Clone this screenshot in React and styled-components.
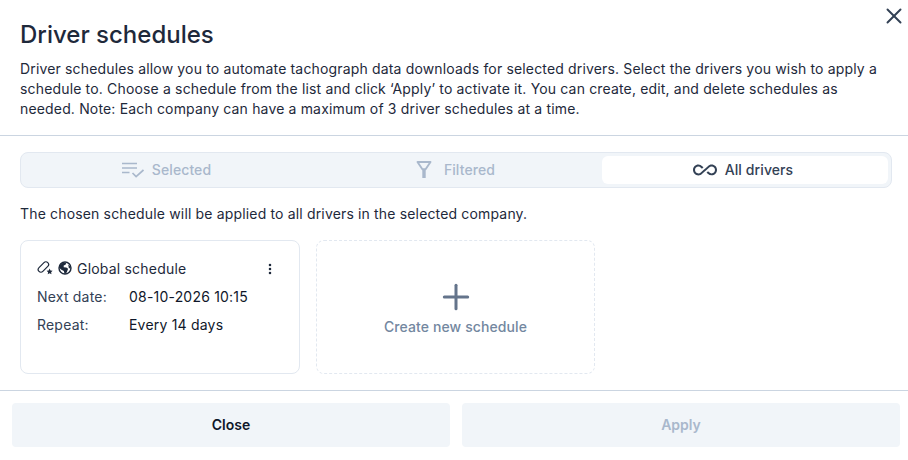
import styled, { createGlobalStyle } from 'styled-components'
import { X, Plus, EllipsisVertical } from 'lucide-react'
import { MdAllInclusive } from 'react-icons/md'

const Global = createGlobalStyle`
  html, body { margin: 0; padding: 0; background: #fff; }
  body { font-family: Inter, "Liberation Sans", sans-serif; color: #0f172a; }
`

const Modal = styled.div`
  width: 908px;
  height: 460px;
  position: relative;
  overflow: hidden;
  background: #fff;
`

const CloseIcon = styled.button`
  position: absolute;
  top: 3px;
  right: 1px;
  width: 26px;
  height: 26px;
  padding: 0;
  border: 0;
  background: none;
  color: #334155;
  display: flex;
  align-items: center;
  justify-content: center;
`

const Header = styled.header`
  height: 136px;
  box-sizing: border-box;
  padding: 19px 20px 0;
  border-bottom: 1px solid #cbd5e1;
`

const Title = styled.h1`
  margin: 0 0 8px;
  font-size: 24px;
  line-height: 32px;
  font-weight: 500;
  color: #1e293b;
`

const Description = styled.p`
  margin: 0;
  font-size: 14px;
  line-height: 20px;
  font-weight: 400;
  letter-spacing: 0.16px;
  color: #1e293b;
`

const Body = styled.section`
  height: 255px;
  box-sizing: border-box;
  padding: 16px 16px 0 20px;
  border-bottom: 1px solid #cbd5e1;
`

const Tabs = styled.div`
  display: grid;
  grid-template-columns: 1fr 1fr 286px;
  height: 36px;
  box-sizing: border-box;
  padding: 3px;
  background: #f1f5f9;
  border: 1px solid #e2e8f0;
  border-radius: 8px;
`

const Tab = styled.div`
  display: flex;
  align-items: center;
  justify-content: center;
  gap: 8px;
  padding: 0 4px 1px 0;
  font-size: 14px;
  font-weight: 500;
  letter-spacing: 0.1px;
  border-radius: 6px;
  color: ${p => (p.$active ? '#334155' : '#a9b8cc')};
  background: ${p => (p.$active ? '#fff' : 'transparent')};
`

const Hint = styled.p`
  margin: 16px 0 16px;
  font-size: 14px;
  line-height: 20px;
  letter-spacing: 0.16px;
  color: #1e293b;
`

const Cards = styled.div`
  display: flex;
  gap: 16px;
`

const Card = styled.article`
  width: 280px;
  height: 134px;
  box-sizing: border-box;
  padding: 14px 16px;
  border: 1px solid #e2e8f0;
  border-radius: 8px;
`

const CardHead = styled.div`
  display: flex;
  align-items: center;
  height: 26px;
  font-size: 14px;
  letter-spacing: 0.2px;
  color: #1e293b;
`

const HeadIcons = styled.span`
  display: flex;
  align-items: center;
  gap: 5px;
`

const CardName = styled.span`
  margin-left: 5px;
  flex: 1;
`

const MenuButton = styled.span`
  display: flex;
  margin: 2px 6px 0 0;
  color: #1e293b;
`

const Row = styled.div`
  display: grid;
  grid-template-columns: 92px 1fr;
  margin-top: ${p => p.$top}px;
  font-size: 14px;
  line-height: 20px;
  letter-spacing: 0.2px;
  color: #0f172a;
`

const RowLabel = styled.span`
  color: #334155;
`

const NewCard = styled.button`
  width: 279px;
  height: 134px;
  padding: 0;
  display: flex;
  flex-direction: column;
  align-items: center;
  justify-content: center;
  background: none;
  border: 1px dashed #e2e8f0;
  border-radius: 8px;
  font: 500 14px/20px Inter, sans-serif;
  letter-spacing: 0.1px;
  color: #7387a0;
`

const PlusMark = styled(Plus)`
  color: #64748b;
`

const Footer = styled.footer`
  display: grid;
  grid-template-columns: 1fr 1fr;
  gap: 12px;
  padding: 12px 8px 0 12px;
`

const FooterButton = styled.button`
  height: 44px;
  border: 0;
  border-radius: 4px;
  background: #f1f5f9;
  font: 600 14px/20px Inter, sans-serif;
  color: ${p => (p.disabled ? '#a9b8cc' : '#0f172a')};
`

const SelectedGlyph = () => (
  <svg width="22" height="16" viewBox="0 0 22 16" fill="none" stroke="currentColor" strokeWidth="1.7">
    <path d="M0 1.5h15M0 6h15M0 10.5h7.5" />
    <path d="M10.5 11l3.6 3.6L21.5 8" />
  </svg>
)

const FilterGlyph = () => (
  <svg width="20" height="17" viewBox="0 0 20 17" fill="none" stroke="currentColor">
    <path d="M1.5 1h13L9.6 8.2H6.4z" strokeWidth="1.9" strokeLinejoin="round" />
    <path d="M6.3 8h3.4v9H6.3z" fill="currentColor" stroke="none" />
  </svg>
)

const LinkStarGlyph = () => (
  <svg width="16" height="15" viewBox="0 0 16 15" fill="none">
    <rect x="-2.7" y="-6.2" width="5.4" height="12.4" rx="2.7" transform="translate(6.4 6) rotate(45)" stroke="#1e293b" strokeWidth="1.2" />
    <path d="M12.6 7.6l.9 1.9 2.1.3-1.5 1.4.4 2.1-1.9-1-1.900 1 .4-2.100-1.500-1.400 2.100-.3z" fill="#1e293b" />
  </svg>
)

const GlobeGlyph = () => (
  <svg width="14" height="14" viewBox="0 0 14 14">
    <circle cx="7" cy="7" r="6" fill="none" stroke="#1e293b" strokeWidth="1.4" />
    <path d="M2 4.2l2.800-2.400 3.400.2-.7 1.800-1.800.7v1.700L8.300 6.500l1.800 1.300-1.400 3.600-2 1.800-.9-3.200L3 8.400 1 6.500z M10.200 3.200l2.200 2.200.3 2.400-1.900-.9z" fill="#1e293b" />
  </svg>
)

export default function App() {
  return (
    <Modal>
      <Global />
      <CloseIcon aria-label="Close"><X size={26} strokeWidth={1.8} /></CloseIcon>
      <Header>
        <Title>Driver schedules</Title>
        <Description>
          Driver schedules allow you to automate tachograph data downloads for selected drivers. Select the drivers you wish to apply a schedule to. Choose a schedule from the list and click ‘Apply’ to activate it. You can create, edit, and delete schedules as needed. Note: Each company can have a maximum of 3 driver schedules at a time.
        </Description>
      </Header>
      <Body>
        <Tabs>
          <Tab><SelectedGlyph />Selected</Tab>
          <Tab><FilterGlyph />Filtered</Tab>
          <Tab $active><MdAllInclusive size={24} />All drivers</Tab>
        </Tabs>
        <Hint>The chosen schedule will be applied to all drivers in the selected company.</Hint>
        <Cards>
          <Card>
            <CardHead>
              <HeadIcons>
                <LinkStarGlyph />
                <GlobeGlyph />
              </HeadIcons>
              <CardName>Global schedule</CardName>
              <MenuButton><EllipsisVertical size={14} strokeWidth={2.4} /></MenuButton>
            </CardHead>
            <Row $top={6}><RowLabel>Next date:</RowLabel>08-10-2026 10:15</Row>
            <Row $top={8}><RowLabel>Repeat:</RowLabel>Every 14 days</Row>
          </Card>
          <NewCard>
            <PlusMark size={40} strokeWidth={1.8} />
            Create new schedule
          </NewCard>
        </Cards>
      </Body>
      <Footer>
        <FooterButton>Close</FooterButton>
        <FooterButton disabled>Apply</FooterButton>
      </Footer>
    </Modal>
  )
}
